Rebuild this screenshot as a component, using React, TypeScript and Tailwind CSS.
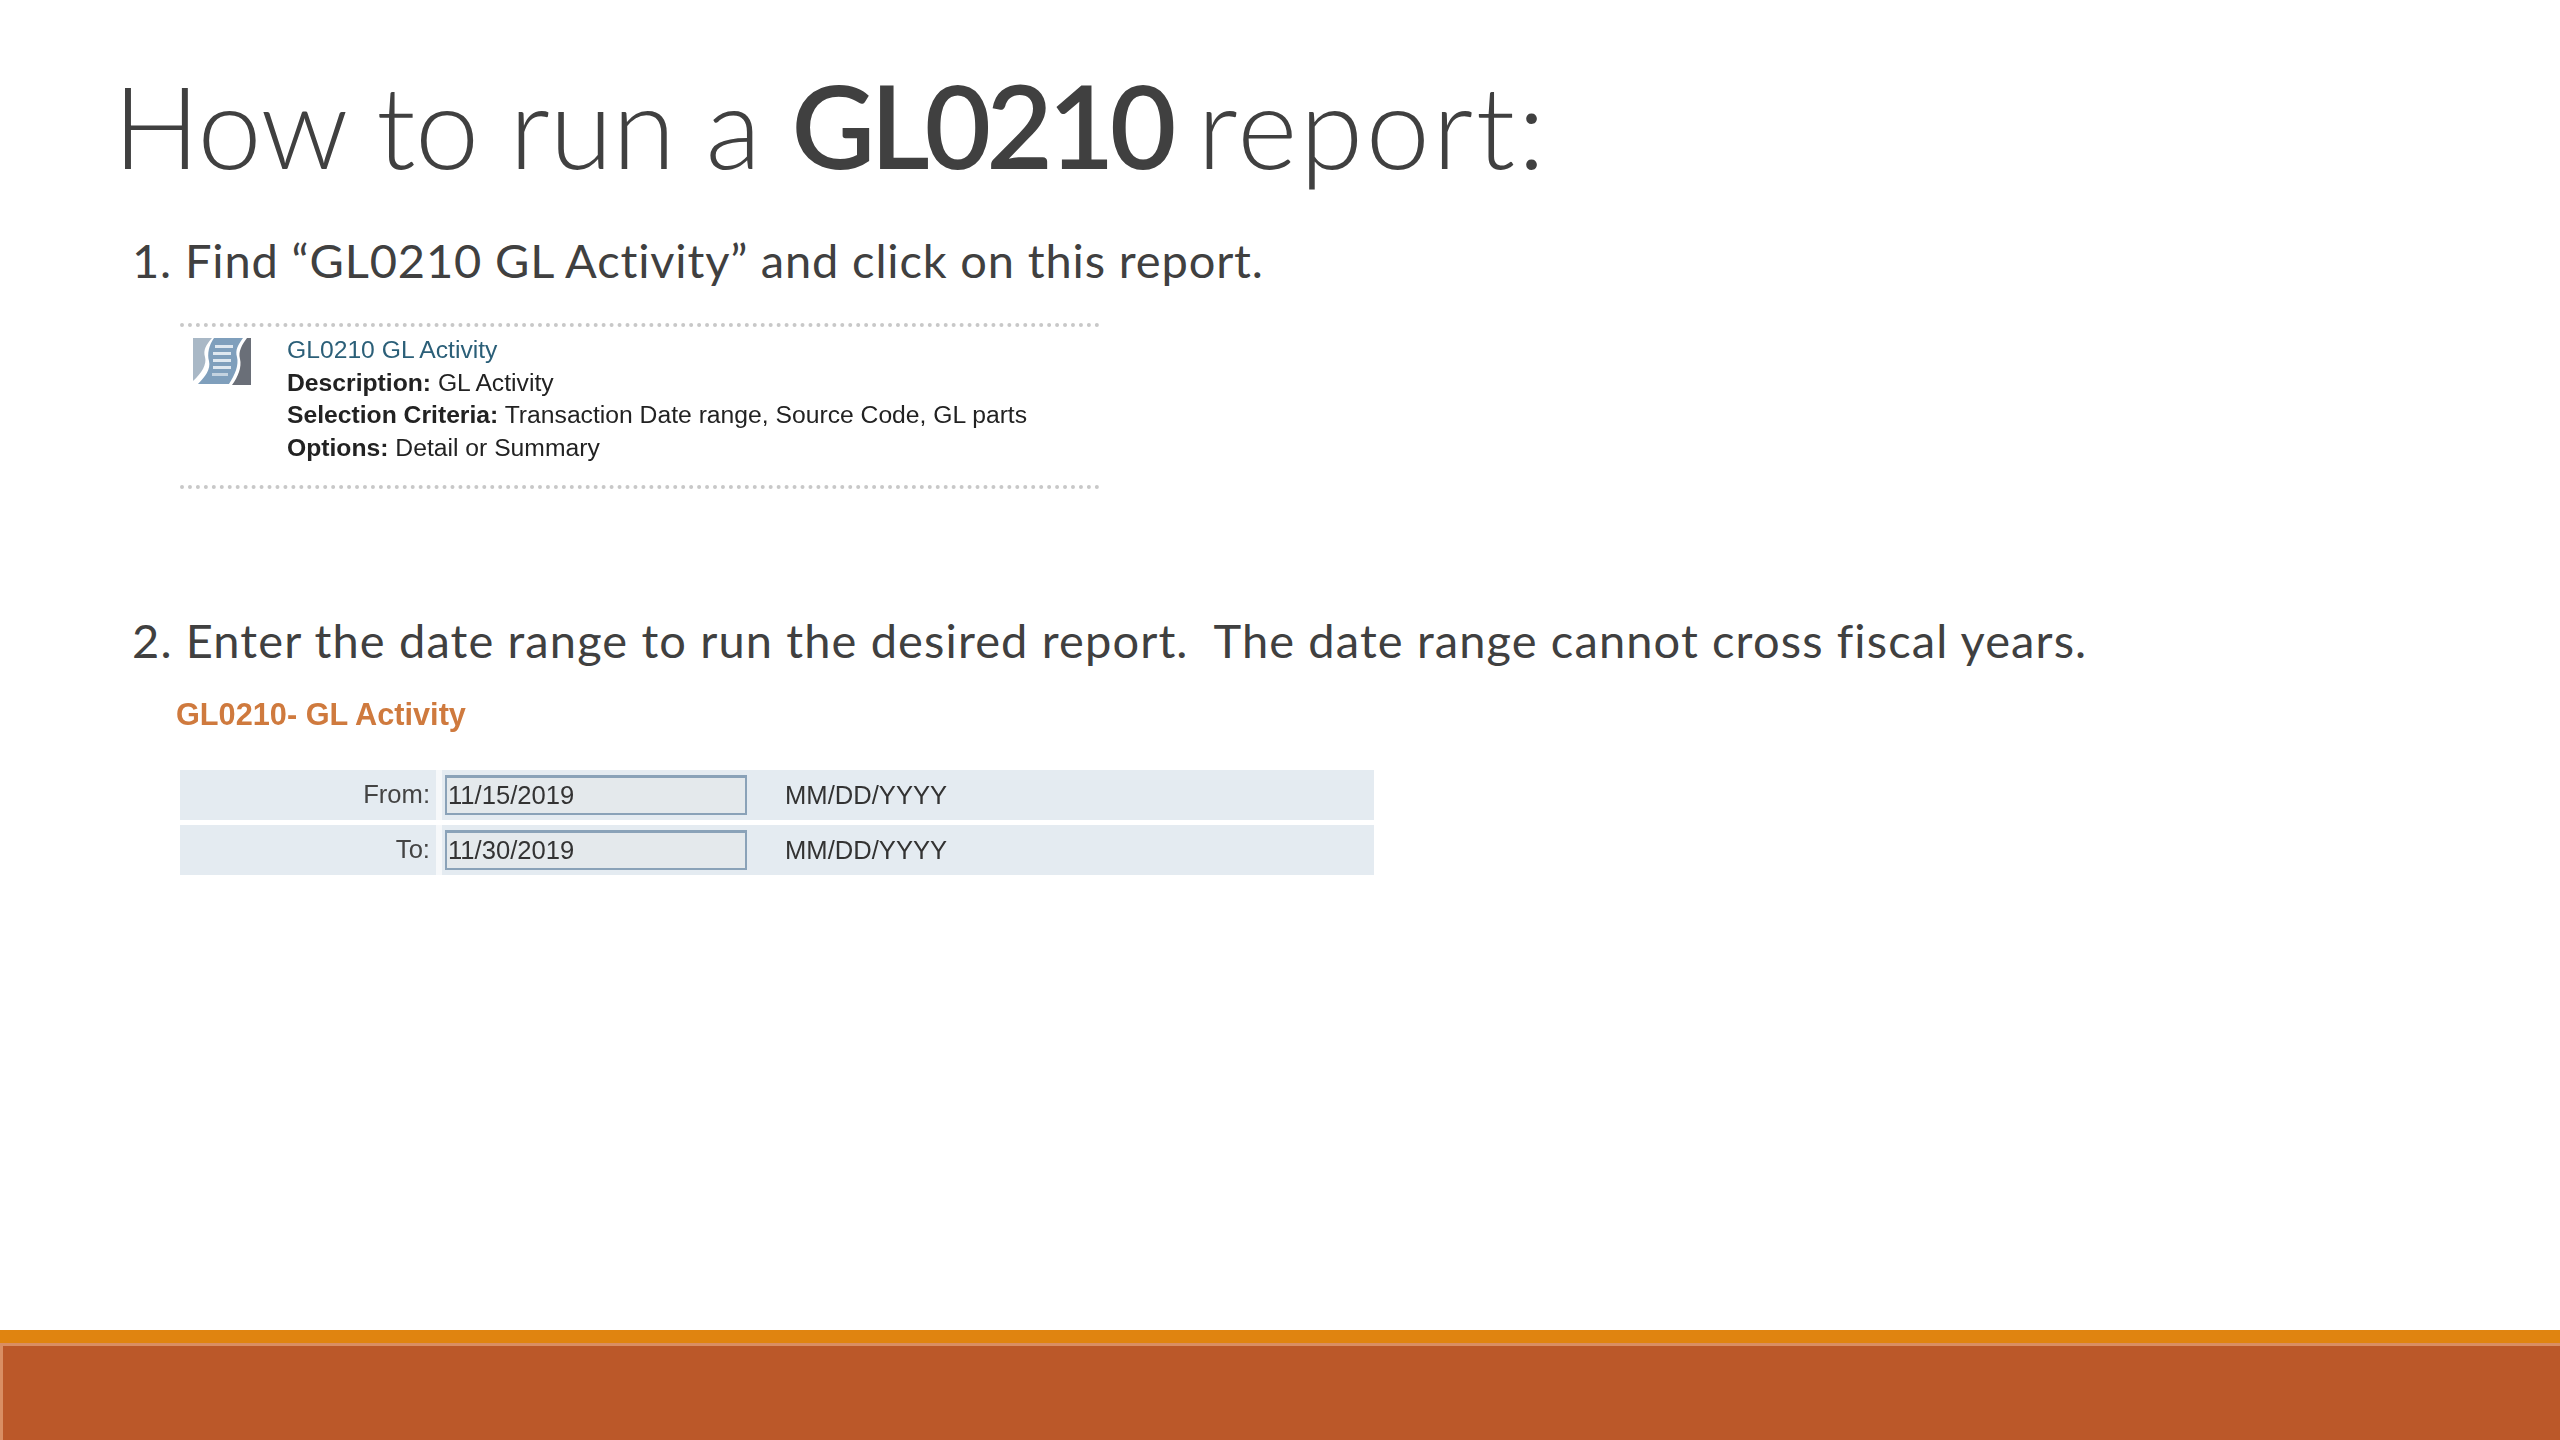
import React from 'react';

const sans = { fontFamily: '"Liberation Sans", Arial, sans-serif' };

const ReportIcon: React.FC = () => (
    <svg width="60" height="50" viewBox="0 0 60 50" className="shrink-0">
        <path d="M1 1H20C14 8 11 13 13 20C15 27 10 36 1 44Z" fill="#a9b8c6" />
        <path d="M22 1H51C46 8 43 13 45 20C47 28 43 38 37 47H6C13 40 19 32 17 24C15 17 17 8 22 1Z" fill="#7f9fbc" />
        <path d="M55 1H59V48H40C46 40 50 30 48 22C46 14 50 8 55 1Z" fill="#6a6f78" />
        <rect x="23" y="8" width="18" height="3" fill="#dfe8f0" />
        <rect x="21" y="15" width="18" height="3" fill="#dfe8f0" />
        <rect x="21" y="22" width="18" height="3" fill="#dfe8f0" />
        <rect x="21" y="29" width="18" height="3" fill="#dfe8f0" />
        <rect x="20" y="36" width="16" height="3" fill="#c4d3e0" />
    </svg>
);

const DateRow: React.FC<{ label: string; value: string }> = ({ label, value }) => (
    <div className="flex h-[50px] items-center bg-[#e4ebf1]">
        <div className="w-[256px] pb-[1px] pr-[6px] text-right text-[25.6px] text-[#444]">{label}</div>
        <div className="h-full w-[6px] bg-[#f6f8fa]" />
        <div className="ml-[3px] flex h-[40px] w-[302px] items-center border-2 border-t-[3px] border-[#8aa2b8] bg-[#e4e9ec] pl-[1px] text-[25.6px] text-[#333]">
            {value}
        </div>
        <div className="ml-[38px] text-[25.6px] text-[#333]">MM/DD/YYYY</div>
    </div>
);

const App: React.FC = () => {
    return (
        <div className="flex h-[1440px] w-[2560px] flex-col overflow-hidden bg-white text-[#404040]" style={{ fontFamily: 'Lato, sans-serif' }}>
            <div className="flex-1 pl-[113px]">
                <h1 className="mt-[49px] h-[150px] text-[115px] font-light leading-[150px] tracking-[-0.5px] whitespace-nowrap">
                    How to run a <span className="font-semibold tracking-[-5px]">GL0210</span> <span className="-ml-[5px] tracking-[2.6px]">report:</span>
                </h1>
                <p className="ml-[19px] mt-[32px] text-[47px] leading-[58px] tracking-[0.85px] whitespace-nowrap">1. Find “GL0210 GL Activity” and click on this report.</p>

                <div className="ml-[67px] mt-[34px] h-[166px] w-[920px] border-y-[4px] border-dotted border-[#c8c8c8] blur-[0.4px]" style={sans}>
                    <div className="flex pl-[12px] pt-[10px]">
                        <ReportIcon />
                        <div className="ml-[35px] -mt-[3px] text-[24.7px] leading-[32.7px] text-[#222]">
                            <div className="text-[#2b5f78]">GL0210 GL Activity</div>
                            <div><b>Description:</b> GL Activity</div>
                            <div><b>Selection Criteria:</b> Transaction Date range, Source Code, GL parts</div>
                            <div><b>Options:</b> Detail or Summary</div>
                        </div>
                    </div>
                </div>

                <p className="ml-[19px] mt-[122px] text-[47px] leading-[58px] tracking-[1.12px] whitespace-nowrap">
                    2. Enter the date range to run the desired report.&nbsp; The date range cannot cross fiscal years.
                </p>

                <div className="blur-[0.4px]" style={sans}>
                    <div className="ml-[63px] mt-[28px] text-[30.7px] font-bold leading-[36px] text-[#cf7a3e]">GL0210- GL Activity</div>
                    <div className="ml-[67px] mt-[37px] flex w-[1194px] flex-col gap-[5px]">
                        <DateRow label="From:" value="11/15/2019" />
                        <DateRow label="To:" value="11/30/2019" />
                    </div>
                </div>
            </div>
            <div className="h-[13px] bg-[#e08410]" />
            <div className="h-[97px] border-l-[3px] border-t-[3px] border-[#d98e63] bg-[#bb5829]" />
        </div>
    );
};

export default App;
